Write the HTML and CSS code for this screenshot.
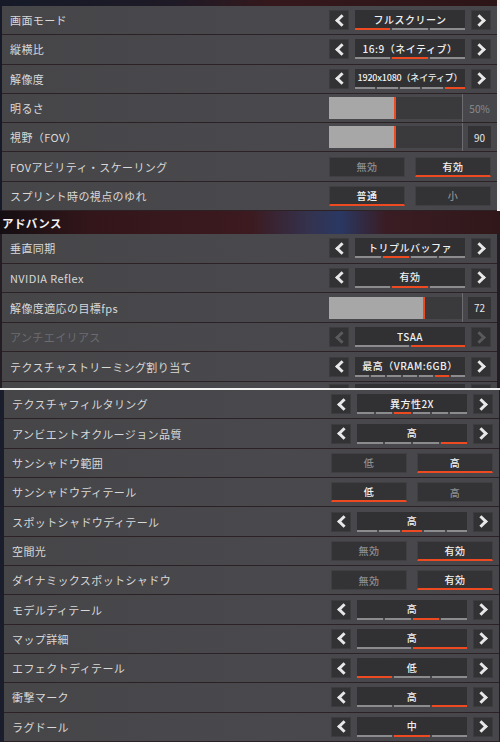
FILE: index.html
```html
<!DOCTYPE html>
<html>
    <head>
        <meta charset="utf-8">
        <title>ビデオ設定</title>
        <link rel="stylesheet" href="styles.css">
    </head>
    <body>

        <!-- first capture -->
        <section class="top">
            <div class="row">
                <span class="label">画面モード</span>
                <div class="stepper">
                    <span class="arrow prev"></span>
                    <div class="value"><span class="text">フルスクリーン</span><div class="segs"><i class="on"></i><i></i><i></i></div></div>
                    <span class="arrow next"></span>
                </div>
            </div>
            <div class="row">
                <span class="label">縦横比</span>
                <div class="stepper">
                    <span class="arrow prev"></span>
                    <div class="value"><span class="text">16:9（ネイティブ）</span><div class="segs"><i></i><i class="on"></i><i></i></div></div>
                    <span class="arrow next"></span>
                </div>
            </div>
            <div class="row">
                <span class="label">解像度</span>
                <div class="stepper">
                    <span class="arrow prev"></span>
                    <div class="value"><span class="text small">1920x1080（ネイティブ）</span><div class="segs"><i></i><i></i><i></i><i></i><i class="on"></i></div></div>
                    <span class="arrow next"></span>
                </div>
            </div>
            <div class="row">
                <span class="label">明るさ</span>
                <div class="slider">
                    <div class="track"><div class="fill" style="width:50%"></div></div>
                    <span class="divider"></span>
                    <span class="num dim">50%</span>
                </div>
            </div>
            <div class="row">
                <span class="label">視野（FOV）</span>
                <div class="slider">
                    <div class="track"><div class="fill" style="width:50%"></div></div>
                    <span class="divider"></span>
                    <span class="num">90</span>
                </div>
            </div>
            <div class="row">
                <span class="label">FOVアビリティ・スケーリング</span>
                <div class="toggle">
                    <span class="opt">無効</span>
                    <span class="opt on">有効</span>
                </div>
            </div>
            <div class="row">
                <span class="label">スプリント時の視点のゆれ</span>
                <div class="toggle">
                    <span class="opt on">普通</span>
                    <span class="opt">小</span>
                </div>
            </div>
        </section>

        <h3 class="heading">アドバンス</h3>

        <!-- second capture -->
        <section class="mid">
            <div class="row">
                <span class="label">垂直同期</span>
                <div class="stepper">
                    <span class="arrow prev"></span>
                    <div class="value"><span class="text">トリプルバッファ</span><div class="segs"><i></i><i class="on"></i><i></i><i></i></div></div>
                    <span class="arrow next"></span>
                </div>
            </div>
            <div class="row">
                <span class="label">NVIDIA Reflex</span>
                <div class="stepper">
                    <span class="arrow prev"></span>
                    <div class="value"><span class="text">有効</span><div class="segs"><i></i><i class="on"></i><i></i></div></div>
                    <span class="arrow next"></span>
                </div>
            </div>
            <div class="row">
                <span class="label">解像度適応の目標fps</span>
                <div class="slider">
                    <div class="track"><div class="fill" style="width:72%"></div></div>
                    <span class="divider"></span>
                    <span class="num">72</span>
                </div>
            </div>
            <div class="row">
                <span class="label off">アンチエイリアス</span>
                <div class="stepper off">
                    <span class="arrow prev"></span>
                    <div class="value"><span class="text">TSAA</span><div class="segs"><i></i><i class="on"></i></div></div>
                    <span class="arrow next"></span>
                </div>
            </div>
            <div class="row">
                <span class="label">テクスチャストリーミング割り当て</span>
                <div class="stepper">
                    <span class="arrow prev"></span>
                    <div class="value"><span class="text">最高（VRAM:6GB）</span><div class="segs"><i></i><i></i><i></i><i></i><i></i><i class="on"></i><i></i></div></div>
                    <span class="arrow next"></span>
                </div>
            </div>
            <div class="row peek">
                <span class="label"></span>
                <div class="stepper">
                    <span class="arrow"></span>
                    <div class="value"><span class="text"></span></div>
                    <span class="arrow"></span>
                </div>
            </div>
        </section>

        <div class="rule"></div>

        <!-- third capture -->
        <section class="low">
            <div class="row">
                <span class="label">テクスチャフィルタリング</span>
                <div class="stepper">
                    <span class="arrow prev"></span>
                    <div class="value"><span class="text">異方性2X</span><div class="segs"><i></i><i></i><i class="on"></i><i></i><i></i><i></i></div></div>
                    <span class="arrow next"></span>
                </div>
            </div>
            <div class="row">
                <span class="label">アンビエントオクルージョン品質</span>
                <div class="stepper">
                    <span class="arrow prev"></span>
                    <div class="value"><span class="text">高</span><div class="segs"><i></i><i></i><i></i><i class="on"></i></div></div>
                    <span class="arrow next"></span>
                </div>
            </div>
            <div class="row">
                <span class="label">サンシャドウ範囲</span>
                <div class="toggle">
                    <span class="opt">低</span>
                    <span class="opt on">高</span>
                </div>
            </div>
            <div class="row">
                <span class="label">サンシャドウディテール</span>
                <div class="toggle">
                    <span class="opt on">低</span>
                    <span class="opt">高</span>
                </div>
            </div>
            <div class="row">
                <span class="label">スポットシャドウディテール</span>
                <div class="stepper">
                    <span class="arrow prev"></span>
                    <div class="value"><span class="text">高</span><div class="segs"><i></i><i></i><i class="on"></i><i></i><i></i></div></div>
                    <span class="arrow next"></span>
                </div>
            </div>
            <div class="row">
                <span class="label">空間光</span>
                <div class="toggle">
                    <span class="opt">無効</span>
                    <span class="opt on">有効</span>
                </div>
            </div>
            <div class="row">
                <span class="label">ダイナミックスポットシャドウ</span>
                <div class="toggle">
                    <span class="opt">無効</span>
                    <span class="opt on">有効</span>
                </div>
            </div>
            <div class="row">
                <span class="label">モデルディテール</span>
                <div class="stepper">
                    <span class="arrow prev"></span>
                    <div class="value"><span class="text">高</span><div class="segs"><i></i><i></i><i class="on"></i><i></i></div></div>
                    <span class="arrow next"></span>
                </div>
            </div>
            <div class="row">
                <span class="label">マップ詳細</span>
                <div class="stepper">
                    <span class="arrow prev"></span>
                    <div class="value"><span class="text">高</span><div class="segs"><i></i><i class="on"></i></div></div>
                    <span class="arrow next"></span>
                </div>
            </div>
            <div class="row">
                <span class="label">エフェクトディテール</span>
                <div class="stepper">
                    <span class="arrow prev"></span>
                    <div class="value"><span class="text">低</span><div class="segs"><i class="on"></i><i></i><i></i></div></div>
                    <span class="arrow next"></span>
                </div>
            </div>
            <div class="row">
                <span class="label">衝撃マーク</span>
                <div class="stepper">
                    <span class="arrow prev"></span>
                    <div class="value"><span class="text">高</span><div class="segs"><i></i><i></i><i class="on"></i></div></div>
                    <span class="arrow next"></span>
                </div>
            </div>
            <div class="row">
                <span class="label">ラグドール</span>
                <div class="stepper">
                    <span class="arrow prev"></span>
                    <div class="value"><span class="text">中</span><div class="segs"><i></i><i class="on"></i><i></i></div></div>
                    <span class="arrow next"></span>
                </div>
            </div>
        </section>

    </body>
</html>
```

FILE: styles.css
```css
body {
    margin: 0;
    width: 500px;
    height: 742px;
    overflow: hidden;
    background: #1c1a20;
    font-family: "Noto Sans CJK JP", "Noto Sans", sans-serif;
}

section {
    display: flex;
    flex-direction: column;
    box-sizing: border-box;
    width: 500px;
}

.top {
    --h: 29.3px;
    padding: 6px 0 0 2px;
    border-right: 3px solid #f2f2f2;
    background: linear-gradient(90deg, #161a28 0, #1e1a26 35%, #35181c 55%, #2c1517 100%);
}

.mid {
    --h: 29.6px;
    padding: 0 3px 0 2px;
    background: #231c22;
}

.low {
    --h: 29.33px;
    padding: 0 1px 0 4px;
    background: #1a1e2c;
}

.heading {
    margin: 0;
    height: 23px;
    display: flex;
    align-items: center;
    padding-left: 2px;
    font-size: 11.5px;
    font-weight: bold;
    letter-spacing: 0.4px;
    color: #f4f4f4;
    background: linear-gradient(90deg, #140e12 0, #33161a 18%, #3c1a1f 50%, #34334f 62%, #2a3863 68%, #3a1d24 77%, #301719 100%);
}

.rule {
    height: 2px;
    background: #f2f2f2;
}

.row {
    display: flex;
    align-items: center;
    box-sizing: border-box;
    height: var(--h);
    padding: 0 6px 0 8px;
    border-bottom: 1px solid #2c2124;
    background: linear-gradient(90deg, #464649 0, #49494d 55%, #47474b 100%);
}

.row.peek {
    height: 6px;
    align-items: flex-start;
    overflow: hidden;
    border-bottom: none;
}

.row.peek .stepper {
    margin-top: 2px;
}

.label {
    flex: 1;
    font-size: 11px;
    letter-spacing: 0.4px;
    color: #d8d8d8;
    white-space: nowrap;
}

.label.off {
    color: #6c6c70;
}

/* stepper with arrows */
.stepper {
    display: flex;
    align-items: center;
    gap: 6px;
    width: 162px;
}

.arrow {
    width: 20px;
    height: 20px;
    box-sizing: border-box;
    display: flex;
    align-items: center;
    justify-content: center;
    background: #323235;
    border: 1px solid #3c3c3f;
    color: #e8e8e8;
}

.arrow.prev::before, .arrow.next::before {
    content: "";
    width: 6px;
    height: 6px;
    border-left: 3px solid currentColor;
    border-bottom: 3px solid currentColor;
}

.arrow.prev::before {
    transform: rotate(45deg);
    margin-left: 4px;
}

.arrow.next::before {
    transform: rotate(-135deg);
    margin-right: 4px;
}

.stepper.off .arrow {
    color: #5a5a5d;
}

.value {
    width: 110px;
    height: 20px;
    display: flex;
    flex-direction: column;
}

.value .text {
    flex: 1;
    display: flex;
    align-items: center;
    justify-content: center;
    background: #313134;
    font-size: 10px;
    font-weight: 500;
    letter-spacing: 0.5px;
    color: #f0f0f0;
    white-space: nowrap;
}

.value .text.small {
    font-size: 9px;
    letter-spacing: -0.2px;
}

.segs {
    display: flex;
    gap: 2px;
    height: 2px;
}

.segs i {
    flex: 1;
    background: #8c8c8e;
}

.segs i.on {
    background: #ee4a22;
}

/* slider */
.slider {
    display: flex;
    align-items: center;
    align-self: stretch;
    width: 162px;
}

.track {
    width: 133px;
    height: 22px;
    background: #3a3a3d;
}

.fill {
    height: 100%;
    box-sizing: border-box;
    background: #a7a7a8;
    border-right: 2px solid #ee4a22;
}

.divider {
    width: 1px;
    align-self: stretch;
    margin-right: 5px;
    background: #6c6c70;
}

.num {
    width: 23px;
    height: 22px;
    display: flex;
    align-items: center;
    justify-content: center;
    background: #333336;
    font-size: 10px;
    color: #e6e6e6;
}

.num.dim {
    background: transparent;
    color: #8a8a8c;
}

/* two option toggle */
.toggle {
    display: flex;
    gap: 10px;
    width: 162px;
}

.opt {
    width: 76px;
    height: 20px;
    box-sizing: border-box;
    display: flex;
    align-items: center;
    justify-content: center;
    background: #333336;
    border: 1px solid #404043;
    font-size: 10px;
    font-weight: 500;
    letter-spacing: 0.5px;
    color: #8e8e90;
}

.opt.on {
    color: #f2f2f2;
    border-bottom: 2px solid #ee4a22;
}
```
